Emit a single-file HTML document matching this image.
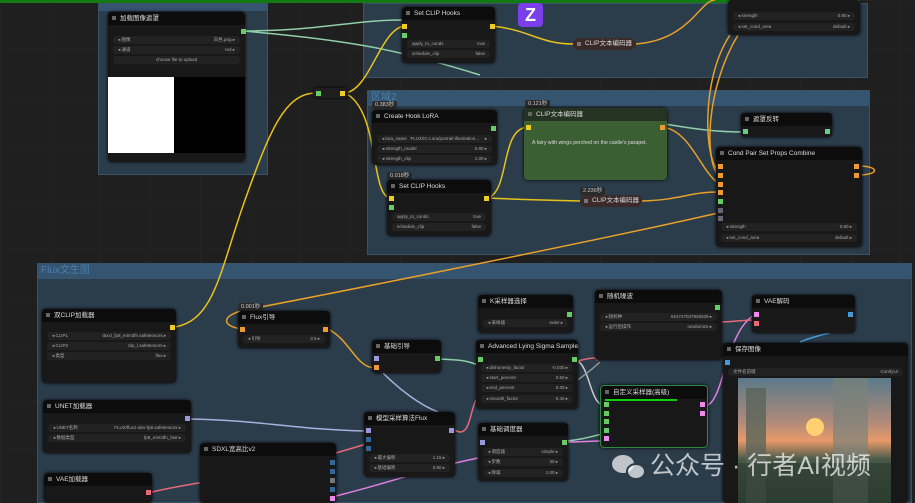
<!DOCTYPE html>
<html><head><meta charset="utf-8">
<style>
*{margin:0;padding:0;box-sizing:border-box}
body{width:915px;height:500px;overflow:hidden;background:#1f1f1f;font-family:"Liberation Sans","Noto Sans CJK SC",sans-serif;position:relative;
background-image:linear-gradient(#232323 1px,transparent 1px),linear-gradient(90deg,#232323 1px,transparent 1px);background-size:50px 50px}
.g{position:absolute;background:#2b3c4a;border:1px solid #3a5266}
.gh{position:absolute;left:0;right:0;top:0;background:#355470;color:#4d7eaa;font-size:10px;padding-left:3px;line-height:14px}
.n{position:absolute;background:#181818;border-radius:4px;box-shadow:0 0 3px #000}
.t{height:13px;background:#0c0c0c;border-radius:4px 4px 0 0;color:#ddd;font-size:6.5px;line-height:13px;padding-left:12px;position:relative;white-space:nowrap;overflow:hidden}
.t:before{content:"";position:absolute;left:4px;top:4px;width:4px;height:4px;background:#666}
.w{position:absolute;left:5px;right:5px;height:8px;background:#222;border-radius:3px;color:#aaa;font-size:4.5px;line-height:8px;padding:0 5px;white-space:nowrap;overflow:hidden}
.w span{float:right}
.s{position:absolute;width:5px;height:5px}
.lb{position:absolute;background:#2a2a2a;color:#ccc;font-size:5.5px;padding:0 3px;line-height:8px;border-radius:2px}
.c{position:absolute;background:#3a2a2a;border-radius:6px;color:#ddd;font-size:6.5px;line-height:12px;padding-left:12px;height:12px}
.c:before{content:"";position:absolute;left:4px;top:4px;width:4px;height:4px;background:#777}
</style></head><body>
<div style="position:absolute;left:0;top:0;width:860px;height:3px;background:#137a13"></div>

<div class="g" style="left:98px;top:3px;width:170px;height:172px"><div class="gh" style="height:7px"></div></div>
<div class="g" style="left:363px;top:3px;width:505px;height:75px"></div>
<div class="g" style="left:367px;top:90px;width:503px;height:165px"><div class="gh" style="height:15px">区域2</div></div>
<div class="g" style="left:37px;top:263px;width:875px;height:240px"><div class="gh" style="height:15px">Flux文生图</div></div>

<svg width="915" height="500" style="position:absolute;left:0;top:0" fill="none" stroke-width="1.5">
<path d="M243 31 C320 31 350 20 404 20" stroke="#8fd0a8"/>
<path d="M243 31 C350 40 400 50 480 75" stroke="#8fd0a8"/>
<path d="M175 327 C215 320 220 270 245 200 C270 130 285 93 316 93" stroke="#e8c21a"/>
<path d="M345 93 C370 90 380 30 404 26" stroke="#e8c21a"/>
<path d="M345 93 C380 110 370 195 390 198" stroke="#e8c21a"/>
<path d="M492 26 C530 30 540 44 573 44" stroke="#e8c21a"/>
<path d="M636 44 C690 40 700 0 715 0" stroke="#e8a02a"/>
<path d="M488 198 C530 200 540 200 580 201" stroke="#e8c21a"/>
<path d="M488 198 C510 190 500 130 527 127" stroke="#e8c21a"/>
<path d="M642 201 C680 200 690 192 718 192" stroke="#e8a02a"/>
<path d="M662 127 C690 130 700 170 718 183" stroke="#e8a02a"/>
<path d="M665 124 C700 130 720 132 744 132" stroke="#8fd0a8"/>
<path d="M730 35 C700 80 705 160 718 170" stroke="#e8a02a"/>
<path d="M738 35 C705 90 705 160 718 175" stroke="#e8a02a"/>
<path d="M858 166 C880 166 880 175 858 175" stroke="#e8a02a"/>
<path d="M242 329 C220 326 222 315 245 310 C350 290 600 240 718 213" stroke="#e8a02a"/>
<path d="M328 329 C350 340 355 366 374 368" stroke="#e8a02a"/>
<path d="M188 419 C260 420 300 430 366 431" stroke="#aab0dd"/>
<path d="M438 359 C460 360 465 360 478 365" stroke="#8fd0a8"/>
<path d="M383 373 C400 390 420 405 438 412" stroke="#aab0dd"/>
<path d="M152 492 C200 480 250 480 366 444" stroke="#e86a7a"/>
<path d="M336 496 C400 480 420 470 478 458" stroke="#e080e0"/>
<path d="M455 430 C470 440 470 410 476 400" stroke="#e86a7a"/>
<path d="M578 361 C590 370 590 400 602 405" stroke="#ccc"/>
<path d="M578 361 C600 355 600 360 596 360" stroke="#e86a7a"/>
<path d="M565 441 C580 440 590 437 602 434" stroke="#8fd0a8"/>
<path d="M565 442 C585 442 590 441 602 441" stroke="#e080e0"/>
<path d="M706 406 C725 400 725 330 756 314" stroke="#e080e0"/>
<path d="M720 322 C735 322 740 320 756 320" stroke="#e86a7a"/>
<path d="M800 342 C810 338 820 335 830 333" stroke="#4aa0e0"/>
<path d="M600 362 C580 380 570 385 565 388" stroke="#999"/>
</svg>

<div class="n" style="left:108px;top:12px;width:137px;height:150px"><div class="t">加载图像遮罩</div>
<div class="s" style="left:133px;top:17px;background:#6c6"></div>
<div class="w" style="top:24px">◂ 图像<span>白色.png ▸</span></div>
<div class="w" style="top:34px">◂ 通道<span>red ▸</span></div>
<div class="w" style="top:44px;text-align:center">choose file to upload</div>
<div style="position:absolute;left:0;top:65px;width:66px;height:76px;background:#fff"></div>
<div style="position:absolute;left:66px;top:65px;width:71px;height:76px;background:#000"></div></div>

<div class="n" style="left:402px;top:7px;width:93px;height:56px"><div class="t">Set CLIP Hooks</div>
<div class="s" style="left:0;top:17px;background:#ec2"></div><div class="s" style="left:0;top:26px;background:#6c6"></div>
<div class="s" style="left:88px;top:17px;background:#ec2"></div>
<div class="w" style="top:33px">apply_to_conds<span>true</span></div><div class="w" style="top:43px">schedule_clip<span>false</span></div></div>
<div style="position:absolute;left:518px;top:3px;width:25px;height:24px;background:#7a3fe8;border-radius:4px;color:#fff;font-size:18px;font-weight:bold;text-align:center;line-height:24px">Z</div>
<div class="c" style="left:573px;top:38px;width:63px">CLIP文本编码器</div>
<div class="n" style="left:728px;top:0;width:132px;height:35px">
<div class="w" style="top:12px">◂ strength<span>0.80 ▸</span></div><div class="w" style="top:23px">◂ set_cond_area<span>default ▸</span></div></div>

<div class="n" style="left:313px;top:88px;width:35px;height:10px;background:#1e1e1e"><div class="s" style="left:3px;top:3px;background:#6c6"></div><div class="s" style="left:27px;top:3px;background:#ec2"></div></div>

<div class="lb" style="left:372px;top:101px">0.383秒</div>
<div class="n" style="left:372px;top:110px;width:125px;height:55px"><div class="t">Create Hook LoRA</div>
<div class="s" style="left:119px;top:16px;background:#6c6"></div>
<div class="w" style="top:25px">◂ lora_name&nbsp;&nbsp; FLUX/IC-Lora/portrait-illustration...<span>▸</span></div>
<div class="w" style="top:35px">◂ strength_model<span>0.80 ▸</span></div><div class="w" style="top:45px">◂ strength_clip<span>1.00 ▸</span></div></div>

<div class="lb" style="left:387px;top:172px">0.018秒</div>
<div class="n" style="left:387px;top:180px;width:104px;height:56px"><div class="t">Set CLIP Hooks</div>
<div class="s" style="left:2px;top:16px;background:#ec2"></div><div class="s" style="left:2px;top:25px;background:#6c6"></div>
<div class="s" style="left:97px;top:16px;background:#ec2"></div>
<div class="w" style="top:33px">apply_to_conds<span>true</span></div><div class="w" style="top:43px">schedule_clip<span>false</span></div></div>

<div class="lb" style="left:525px;top:100px">0.121秒</div>
<div class="n" style="left:524px;top:108px;width:143px;height:72px;background:#3b5e32"><div class="t" style="background:#253322">CLIP文本编码器</div>
<div class="s" style="left:2px;top:17px;background:#ec2"></div><div class="s" style="left:136px;top:17px;background:#e93"></div>
<div style="position:absolute;left:8px;top:32px;color:#ddd;font-size:5.2px">A fairy with wings perched on the castle's parapet.</div></div>
<div class="lb" style="left:580px;top:187px">2.236秒</div>
<div class="c" style="left:580px;top:195px;width:62px">CLIP文本编码器</div>

<div class="n" style="left:741px;top:113px;width:91px;height:24px"><div class="t">遮罩反转</div>
<div class="s" style="left:2px;top:16px;background:#6c8"></div><div class="s" style="left:84px;top:16px;background:#6c8"></div></div>

<div class="n" style="left:716px;top:147px;width:146px;height:100px"><div class="t">Cond Pair Set Props Combine</div>
<div class="s" style="left:2px;top:17px;background:#e93"></div><div class="s" style="left:2px;top:26px;background:#e93"></div><div class="s" style="left:2px;top:35px;background:#e93"></div><div class="s" style="left:2px;top:43px;background:#e93"></div><div class="s" style="left:2px;top:52px;background:#6c6"></div><div class="s" style="left:2px;top:61px;background:#667"></div><div class="s" style="left:2px;top:69px;background:#667"></div>
<div class="s" style="left:138px;top:17px;background:#e93"></div><div class="s" style="left:138px;top:26px;background:#e93"></div>
<div class="w" style="top:76px">◂ strength<span>0.80 ▸</span></div><div class="w" style="top:87px">◂ set_cond_area<span>default ▸</span></div></div>

<div class="n" style="left:42px;top:309px;width:134px;height:74px"><div class="t">双CLIP加载器</div>
<div class="s" style="left:128px;top:16px;background:#ec2"></div>
<div class="w" style="top:23px">◂ CLIP1<span>t5xxl_fp8_e4m3fn.safetensors ▸</span></div>
<div class="w" style="top:33px">◂ CLIP2<span>clip_l.safetensors ▸</span></div><div class="w" style="top:43px">◂ 类型<span>flux ▸</span></div></div>

<div class="lb" style="left:238px;top:303px">0.001秒</div>
<div class="n" style="left:238px;top:311px;width:92px;height:37px"><div class="t">Flux引导</div>
<div class="s" style="left:2px;top:16px;background:#e93"></div><div class="s" style="left:85px;top:16px;background:#e93"></div>
<div class="w" style="top:24px">◂ 引导<span>3.5 ▸</span></div></div>

<div class="n" style="left:372px;top:340px;width:69px;height:33px"><div class="t">基础引导</div>
<div class="s" style="left:2px;top:16px;background:#99d"></div><div class="s" style="left:2px;top:25px;background:#e93"></div><div class="s" style="left:63px;top:16px;background:#6c6"></div></div>

<div class="n" style="left:43px;top:400px;width:148px;height:53px"><div class="t">UNET加载器</div>
<div class="s" style="left:142px;top:16px;background:#99d"></div>
<div class="w" style="top:24px">◂ UNET名称<span>FLUX/flux1-dev-fp8.safetensors ▸</span></div><div class="w" style="top:34px">◂ 数据类型<span>fp8_e4m3fn_fast ▸</span></div></div>

<div class="n" style="left:364px;top:412px;width:91px;height:65px"><div class="t">模型采样算法Flux</div>
<div class="s" style="left:2px;top:16px;background:#99d"></div><div class="s" style="left:2px;top:25px;background:#369"></div><div class="s" style="left:2px;top:34px;background:#369"></div><div class="s" style="left:85px;top:16px;background:#99d"></div>
<div class="w" style="top:42px">◂ 最大偏移<span>1.15 ▸</span></div><div class="w" style="top:52px">◂ 基础偏移<span>0.50 ▸</span></div></div>

<div class="n" style="left:200px;top:443px;width:136px;height:60px"><div class="t">SDXL宽高比v2</div>
<div class="s" style="left:130px;top:17px;background:#369"></div><div class="s" style="left:130px;top:26px;background:#369"></div><div class="s" style="left:130px;top:35px;background:#777"></div><div class="s" style="left:130px;top:44px;background:#369"></div><div class="s" style="left:130px;top:53px;background:#e8e"></div></div>

<div class="n" style="left:44px;top:473px;width:108px;height:30px"><div class="t">VAE加载器</div><div class="s" style="left:102px;top:17px;background:#e67"></div></div>

<div class="n" style="left:478px;top:295px;width:95px;height:38px"><div class="t">K采样器选择</div>
<div class="s" style="left:89px;top:17px;background:#6c6"></div><div class="w" style="top:24px">◂ 采样器<span>euler ▸</span></div></div>

<div class="n" style="left:476px;top:340px;width:102px;height:69px"><div class="t">Advanced Lying Sigma Sampler</div>
<div class="s" style="left:2px;top:17px;background:#6c6"></div><div class="s" style="left:96px;top:17px;background:#6c6"></div>
<div class="w" style="top:24px">◂ dishonesty_factor<span>-0.030 ▸</span></div><div class="w" style="top:34px">◂ start_percent<span>0.50 ▸</span></div><div class="w" style="top:44px">◂ end_percent<span>0.30 ▸</span></div><div class="w" style="top:55px">◂ smooth_factor<span>0.40 ▸</span></div></div>

<div class="n" style="left:478px;top:423px;width:90px;height:58px"><div class="t">基础调度器</div>
<div class="s" style="left:2px;top:17px;background:#99d"></div><div class="s" style="left:84px;top:17px;background:#6c6"></div>
<div class="w" style="top:25px">◂ 调度器<span>simple ▸</span></div><div class="w" style="top:35px">◂ 步数<span>30 ▸</span></div><div class="w" style="top:46px">◂ 降噪<span>1.00 ▸</span></div></div>

<div class="n" style="left:595px;top:290px;width:127px;height:70px"><div class="t">随机噪波</div>
<div class="s" style="left:120px;top:15px;background:#6c6"></div>
<div class="w" style="top:23px">◂ 随机种<span>624747037925939 ▸</span></div><div class="w" style="top:33px">◂ 运行后操作<span>randomize ▸</span></div></div>

<div class="n" style="left:600px;top:385px;width:108px;height:63px;border:1.5px solid #2f8a3f"><div class="t">自定义采样器(高级)</div>
<div style="position:absolute;left:4px;top:13px;width:72px;height:2px;background:#1c1"></div>
<div class="s" style="left:3px;top:16px;background:#6c6"></div><div class="s" style="left:3px;top:25px;background:#6c6"></div><div class="s" style="left:3px;top:33px;background:#6c6"></div><div class="s" style="left:3px;top:42px;background:#6c6"></div><div class="s" style="left:3px;top:50px;background:#e8e"></div>
<div class="s" style="left:99px;top:16px;background:#e8e"></div><div class="s" style="left:99px;top:25px;background:#e8e"></div></div>

<div class="n" style="left:752px;top:295px;width:103px;height:38px"><div class="t">VAE解码</div>
<div class="s" style="left:2px;top:17px;background:#e8e"></div><div class="s" style="left:2px;top:26px;background:#e67"></div><div class="s" style="left:96px;top:17px;background:#49d"></div></div>

<div class="n" style="left:723px;top:343px;width:185px;height:160px"><div class="t">保存图像</div>
<div class="s" style="left:2px;top:17px;background:#49d"></div>
<div class="w" style="top:25px">文件名前缀<span>ComfyUI</span></div>
<div style="position:absolute;left:15px;top:35px;width:153px;height:125px;background:linear-gradient(180deg,#5a7a8a 0%,#b08a7a 35%,#e89a6a 50%,#4a5a4a 65%,#2a3a30 100%)">
<div style="position:absolute;left:68px;top:40px;width:18px;height:18px;border-radius:50%;background:#ffd070"></div>
<div style="position:absolute;left:8px;top:10px;width:20px;height:115px;background:#5a645a;opacity:.8"></div>
<div style="position:absolute;left:95px;top:0;width:35px;height:125px;background:#7a827a;opacity:.7"></div>
<div style="position:absolute;left:0;top:85px;width:153px;height:40px;background:#2e3e32;opacity:.7"></div></div></div>

<div style="position:absolute;left:612px;top:446px;color:rgba(255,255,255,.7);font-size:25px;white-space:nowrap;font-family:'Liberation Sans','Noto Sans CJK SC',sans-serif">
<span style="display:inline-block;width:38px;height:28px;vertical-align:middle;position:relative"><span style="position:absolute;left:0;top:2px;width:22px;height:18px;border-radius:50%;background:rgba(255,255,255,.7)"></span><span style="position:absolute;left:14px;top:10px;width:20px;height:17px;border-radius:50%;background:rgba(255,255,255,.7);border:2px solid #2b3c4a"></span></span>公众号 · 行者AI视频</div>
</body></html>
